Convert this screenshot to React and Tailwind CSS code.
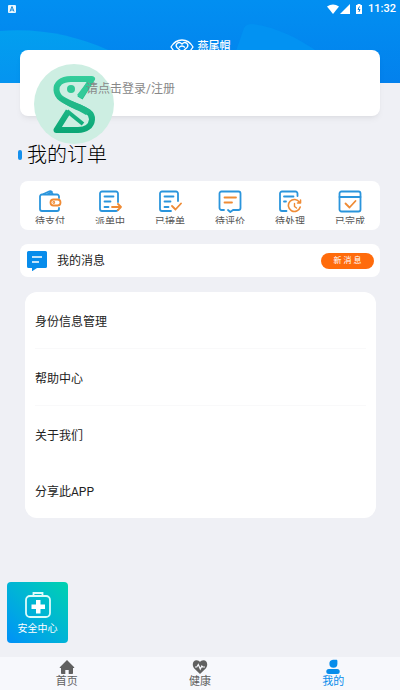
import React from "react";

const orders = [
  { label: "待支付", icon: WalletIcon },
  { label: "派单中", icon: DispatchIcon },
  { label: "已接单", icon: AcceptedIcon },
  { label: "待评价", icon: ReviewIcon },
  { label: "待处理", icon: PendingIcon },
  { label: "已完成", icon: DoneIcon },
];

const menuItems = [
  { label: "身份信息管理", divider: true },
  { label: "帮助中心", divider: true },
  { label: "关于我们", divider: false },
  { label: "分享此APP", divider: false },
];

const tabs = [
  { label: "首页", icon: HomeIcon, active: false },
  { label: "健康", icon: HealthIcon, active: false },
  { label: "我的", icon: UserIcon, active: true },
];

function OrderSvg({ children }) {
  return (
    <svg
      viewBox="0 0 24 24"
      className="w-6 h-6"
      fill="none"
      stroke="#2b95dc"
      strokeWidth="1.8"
      strokeLinecap="round"
      strokeLinejoin="round"
      aria-hidden="true"
    >
      {children}
    </svg>
  );
}

function WalletIcon() {
  return (
    <OrderSvg>
      <path d="M21 9V7.500a2 2 0 0 0-2-2H4a2 2 0 0 0-2 2V20a2 2 0 0 0 2 2h15a2 2 0 0 0 2-2v-1" />
      <path d="M5.500 5 11.500 2.300c1.500-.6 2.500 0 3 2.700M10 5l4-2" />
      <rect x="12.500" y="10.500" width="10" height="6" rx="3" stroke="#ef8b35" />
      <circle cx="15.800" cy="13.500" r=".5" stroke="#ef8b35" />
    </OrderSvg>
  );
}

function DispatchIcon() {
  return (
    <OrderSvg>
      <path d="M20 13V4.500a2 2 0 0 0-2-2H4a2 2 0 0 0-2 2V20a2 2 0 0 0 2 2h14a2 2 0 0 0 1.800-1" />
      <path d="M6.500 7.500h9M6.500 12.500h6M6.500 18h4" />
      <path d="M14 18h9M20 15l3 3-3 3" stroke="#ef8b35" />
    </OrderSvg>
  );
}

function AcceptedIcon() {
  return (
    <OrderSvg>
      <path d="M20 12V4.500a2 2 0 0 0-2-2H4a2 2 0 0 0-2 2V20a2 2 0 0 0 2 2h9" />
      <path d="M6.500 7.500h9M6.500 12.500h6M6.500 18h4" />
      <path d="m14 17 3.500 3.500 5.500-6" stroke="#ef8b35" />
    </OrderSvg>
  );
}

function ReviewIcon() {
  return (
    <OrderSvg>
      <path d="M6 21H3.500a2 2 0 0 1-2-2V4.500a2 2 0 0 1 2-2h17a2 2 0 0 1 2 2V19a2 2 0 0 1-2 2H15l-2.700 2L10 21" />
      <path d="M6.500 8.500h11.500M6.500 13.500h7.500" stroke="#ef8b35" />
    </OrderSvg>
  );
}

function PendingIcon() {
  return (
    <OrderSvg>
      <path d="M19.500 7V4.500a2 2 0 0 0-2-2H4a2 2 0 0 0-2 2V20a2 2 0 0 0 2 2h4.500" />
      <path d="M6 7.500h9.500M6 12.500h2" />
      <path d="M21.500 13.300a6 6 0 1 0 .7 4.700M22.500 11v3h-3" stroke="#ef8b35" strokeWidth="1.6" />
      <path d="M16.500 14.500v3l2 1.500" stroke="#ef8b35" strokeWidth="1.4" />
    </OrderSvg>
  );
}

function DoneIcon() {
  return (
    <OrderSvg>
      <rect x="1.500" y="2.500" width="21" height="20" rx="2" />
      <path d="M1.500 8h21" />
      <path d="m7.500 14.500 4 4 6-6.500" stroke="#ef8b35" />
    </OrderSvg>
  );
}

function HomeIcon() {
  return (
    <svg viewBox="0 0 16 16" className="w-4 h-4" fill="currentColor" aria-hidden="true">
      <path d="M8 1 .8 8.200c-.3.400 0 .8.400.8H2v5.200c0 .5.300.8.800.8h3.500v-4h3.400v4h3.500c.5 0 .8-.3.800-.8V9h.8c.4 0 .7-.4.400-.8Z" />
    </svg>
  );
}

function HealthIcon() {
  return (
    <svg viewBox="0 0 16 16" className="w-4 h-4" aria-hidden="true">
      <path
        d="M8 15 2.300 9.400C-.4 6.300.6 1.200 4.600 1.200 6.200 1.200 7.300 2 8 3c.7-1 1.800-1.800 3.400-1.800 4 0 5 5.100 2.300 8.200Z"
        fill="currentColor"
      />
      <path d="M3 8h1.800L6.300 5.500l2 4.500 1.500-3 1 1H13" fill="none" stroke="#f7f8fc" strokeWidth="1.200" />
    </svg>
  );
}

function UserIcon() {
  return (
    <svg viewBox="0 0 16 16" className="w-4 h-4" fill="currentColor" aria-hidden="true">
      <path d="M8 .8h3.200c.7 0 1.200.5 1.200 1.200v2.800A4 4 0 1 1 8 .8Z" />
      <rect x="1.300" y="10" width="13.400" height="5" rx="2.500" />
    </svg>
  );
}

function Avatar() {
  return (
    <svg viewBox="0 0 80 80" className="w-20 h-20 shrink-0" role="img" aria-label="头像">
      <defs>
        <linearGradient id="mark" gradientUnits="userSpaceOnUse" x1="0" y1="12" x2="0" y2="69">
          <stop offset="0" stopColor="#34cd9b" />
          <stop offset="1" stopColor="#0aa675" />
        </linearGradient>
      </defs>
      <circle cx="40" cy="40" r="40" fill="#cdeee2" />
      <g fill="none" stroke="url(#mark)" strokeLinejoin="round">
        <path
          d="M46 34 58 15H37C27 15 22 20 22.500 26c.5 8 8 11 17 15 12 5 19 7 18.500 14.500C57.500 62 52 66 44 66H22.500l12-19"
          strokeWidth="6"
        />
        <path d="M33 47 49 60" strokeWidth="4" />
      </g>
      <path d="M43 31 54 17h5L48 35Z" fill="#32ca99" />
      <path d="M27 33C36 37 50 40 57 47l-5 4C43 45 32 43 25 35Z" fill="#20b888" />
      <circle cx="37" cy="25" r="4" fill="#30c895" />
    </svg>
  );
}

function HeaderWaves() {
  return (
    <svg
      viewBox="0 0 400 83"
      preserveAspectRatio="none"
      className="absolute inset-0 w-full h-full"
      aria-hidden="true"
    >
      <defs>
        <linearGradient id="wave" x1="0" y1="0" x2="0" y2="1">
          <stop offset="0" stopColor="#029fef" />
          <stop offset="1" stopColor="#0594f0" />
        </linearGradient>
      </defs>
      <path d="M0 31C42 28 76 36 108 50L175 83H0Z" fill="url(#wave)" />
      <path d="M235 54 244 28Q246 24 252 24C276 27 298 38 318 52L335 62H228Z" fill="#0292f2" />
    </svg>
  );
}

function StatusBar() {
  return (
    <div className="relative flex items-center justify-between h-[18px] pl-2 pr-1 text-white">
      <svg viewBox="0 0 8 8" className="w-2 h-2" aria-hidden="true">
        <rect width="8" height="8" rx="1" fill="#e8f7ff" />
        <path d="M2 6.500 4 1.500l2 5M3 5h2" fill="none" stroke="#1789d8" />
      </svg>
      <div className="flex items-center gap-[5px]">
        <div className="flex items-center gap-px">
          <svg viewBox="0 0 12 10" className="w-3 h-[10px]" fill="currentColor" aria-hidden="true">
            <path d="M0 2.500Q6-1.500 12 2.500L6 10Z" />
          </svg>
          <svg viewBox="0 0 10 10" className="w-[10px] h-[10px]" fill="currentColor" aria-hidden="true">
            <path d="M10 0v10H0Z" />
          </svg>
        </div>
        <svg viewBox="0 0 8 10" className="w-2 h-[10px]" aria-hidden="true">
          <path d="M1 1h1.500V0h3v1H7v9H1Z" fill="#fff" />
          <path d="M4.500 2.500 3 5.500h2L3.800 8" fill="none" stroke="#087fd5" />
        </svg>
        <span className="text-[11px] leading-[18px] font-medium">11:32</span>
      </div>
    </div>
  );
}

const App = () => {
  return (
    <div className="min-h-screen flex flex-col bg-[#eff0f5] text-[#222] font-[Roboto,'Noto_Sans_CJK_SC',sans-serif]">
      <header className="relative h-[83px] bg-linear-to-b from-[#028ff1] to-[#0381ed]">
        <HeaderWaves />
        <StatusBar />
        <div className="relative flex justify-center items-center gap-1 pt-[21px] text-white">
          <svg viewBox="0 0 24 16" className="w-6 h-4" fill="none" stroke="currentColor" strokeWidth="1.300" aria-hidden="true">
            <path d="M1 8Q5 1 12 1t11 7q-4 7-11 7T1 8Z" />
            <path d="M12 13 7 8.500C4.500 5.500 8.500 1.500 12 5c3.500-3.500 7.500.5 5 3.500Z" />
            <path d="M9 8.500Q12 5.500 15 8.500" />
          </svg>
          <span className="text-[11px] leading-4 font-medium">燕尾帽</span>
        </div>
      </header>

      <main className="flex-1 flex flex-col px-5">
        <section className="relative -mt-[33px] h-[66px] px-[14px] pt-[14px] flex items-start rounded-lg bg-white shadow-md shadow-black/5">
          <Avatar />
          <a href="#login" className="relative -ml-7 pt-4 text-xs leading-[18px] text-[#888]">
            请点击登录/注册
          </a>
        </section>

        <h1 className="flex items-center gap-[5px] mt-6 -ml-0.5 text-xl leading-[30px] font-light text-black">
          <span className="w-1 h-[10px] rounded-sm bg-[#1590ed]"></span>
          我的订单
        </h1>

        <section className="grid grid-cols-6 mt-[11px] pt-2 pb-[6px] rounded-lg bg-white">
          {orders.map((order) => (
            <button key={order.label} type="button" className="flex flex-col items-center gap-[3px]">
              <order.icon />
              <span className="h-2 overflow-hidden text-[10px] leading-3 text-[#555]">{order.label}</span>
            </button>
          ))}
        </section>

        <button type="button" className="flex items-center mt-[14px] h-[33px] pl-[7px] pr-[6px] rounded-lg bg-white">
          <svg viewBox="0 0 20 20" className="w-5 h-5" aria-hidden="true">
            <path d="M1.500 0h17A1.500 1.500 0 0 1 20 1.500v14a1.500 1.500 0 0 1-1.500 1.500H10l-5 3.300V17H1.500A1.500 1.500 0 0 1 0 15.500v-14A1.500 1.500 0 0 1 1.500 0Z" fill="#078ceb" />
            <path d="M5 6h10M5 11h7" stroke="#fff" strokeWidth="1.600" />
          </svg>
          <span className="ml-[10px] text-xs">我的消息</span>
          <span className="ml-auto w-[53px] rounded-full bg-[#ff6b0b] text-center text-[8px] leading-4 text-white">
            新 消 息
          </span>
        </button>

        <ul className="mt-[15px] ml-[5px] mr-1 px-[10px] rounded-xl bg-white">
          {menuItems.map((item) => (
            <li key={item.label} className={item.divider ? "border-b border-[#f9f9fa]" : ""}>
              <a href="#menu" className="flex items-center h-14 pt-[3px] text-xs">
                {item.label}
              </a>
            </li>
          ))}
        </ul>

        <button
          type="button"
          className="flex flex-col items-center mt-auto mb-[14px] -ml-[13px] w-[61px] h-[61px] pt-[9px] gap-1 rounded-sm bg-linear-to-tr from-[#0090f8] to-[#04d2ae] text-white"
        >
          <svg viewBox="0 0 28 28" className="w-7 h-7" aria-hidden="true">
            <rect x="2" y="5" width="24" height="21" rx="4" fill="none" stroke="#dcfbfa" strokeWidth="1.800" />
            <path d="M9.500 4.500V2h9v2.500" fill="none" stroke="#dcfbfa" strokeWidth="1.800" />
            <path d="M12 9h4.500v4.500H21V18h-4.500v4.500H12V18H7.500v-4.500H12Z" fill="#fff" />
          </svg>
          <span className="text-[10px] leading-3">安全中心</span>
        </button>
      </main>

      <nav className="grid grid-cols-3 h-[33px] bg-[#f7f8fc]">
        {tabs.map((tab) => (
          <a
            key={tab.label}
            href="#tab"
            className={`flex flex-col items-center pt-0.5 ${tab.active ? "text-[#078ceb]" : "text-[#606060]"}`}
          >
            <tab.icon />
            <span className="text-[11px] leading-[14px]">{tab.label}</span>
          </a>
        ))}
      </nav>
    </div>
  );
};

export default App;
